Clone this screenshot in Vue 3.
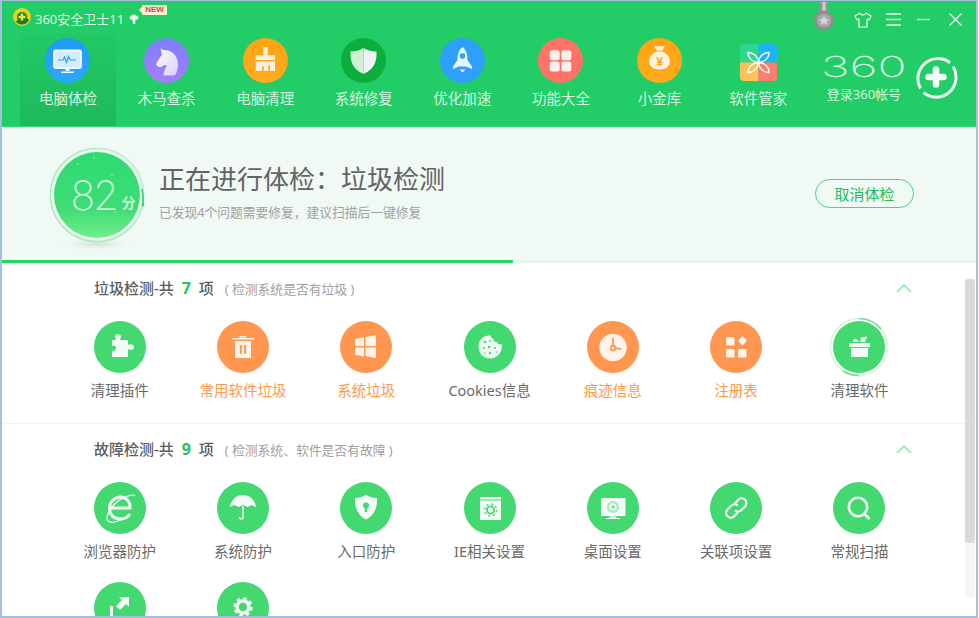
<template>
  <div class="window">
    <header class="header">
      <div class="titlebar">
        <svg class="logo" viewBox="0 0 18 18" width="18" height="18">
          <circle cx="9" cy="9" r="9" fill="#e8d21a" />
          <path d="M3 14 A8 8 0 0 0 16 12 L13 9 L6 10Z" fill="#1f7a2a" />
          <circle cx="9" cy="9" r="5" fill="#17802e" />
          <path d="M7.8 5.5h2.4v2.3h2.3v2.4h-2.3v2.3H7.8v-2.3H5.5V7.8h2.3z" fill="#f2e33a" />
        </svg>
        <span class="app-name">360安全卫士11</span>
        <svg class="tree" viewBox="0 0 10 11" width="10" height="11">
          <path d="M5 0.5c2 0 2.6 1 2.6 1.6C9 2.3 9.8 3.3 9.4 4.6 9 5.8 7.6 6 6.3 5.8V10H3.7V5.8C2.400 6 1 5.800 .6 4.600.2 3.300 1 2.300 2.400 2.100 2.400 1.500 3 .5 5 .5z" fill="#e4f8ec" />
        </svg>
        <span class="new-tag">NEW</span>
        <div class="spacer"></div>
        <svg class="medal" viewBox="0 0 20 29" width="20" height="29">
          <rect x="6" y="0" width="8" height="9" fill="#9a9a9a" />
          <rect x="8.500" y="0" width="3" height="9" fill="#cfcfcf" />
          <circle cx="10" cy="18.500" r="10" fill="#8f8f8f" />
          <circle cx="10" cy="18.500" r="7" fill="#a8a8a8" />
          <path d="M10 13.500l1.500 3.200 3.500.4-2.600 2.300.7 3.400-3.100-1.700-3.100 1.700.7-3.400L5 17.100l3.500-.4z" fill="#d6d6d6" />
        </svg>
        <svg class="ctl shirt" viewBox="0 0 18 16" width="18" height="16">
          <path d="M6 1 L1 4 L3 8 L5 7 V15 H13 V7 L15 8 L17 4 L12 1 C11.500 3.500 6.500 3.500 6 1Z" fill="none" stroke="#f4fdf7" stroke-width="1.200" stroke-linejoin="round" />
        </svg>
        <svg class="ctl menu" viewBox="0 0 15 13" width="15" height="13">
          <path d="M0 1h15M0 6.500h15M0 12h15" stroke="#e8f9ef" stroke-width="1.300" />
        </svg>
        <svg class="ctl min" viewBox="0 0 13 13" width="13" height="13">
          <path d="M0 6.500h13" stroke="#e8f9ef" stroke-width="1.300" />
        </svg>
        <svg class="ctl close" viewBox="0 0 13 13" width="13" height="13">
          <path d="M.5 .5l12 12M12.500 .5l-12 12" stroke="#e8f9ef" stroke-width="1.300" />
        </svg>
      </div>
      <nav class="nav">
        <div class="tabs">
          <div v-for="(t, i) in tabs" :key="t.label" class="tab" :class="{ active: i === 0 }">
            <div class="tab-ico" :class="t.cls">
              <svg viewBox="0 0 45 45" width="45" height="45" v-html="t.svg"></svg>
            </div>
            <span class="tab-label">{{ t.label }}</span>
          </div>
        </div>
        <div class="account">
          <div class="account-text">
            <div class="brand"><span>360</span></div>
            <div class="login">登录360帐号</div>
          </div>
          <svg class="plus" viewBox="0 0 44 44" width="44" height="44">
            <path d="M6.500 33.500 A20 20 0 0 1 36 7.700 M39 11.500 A20 20 0 0 1 9.500 37.700" fill="none" stroke="#f0fcf5" stroke-width="3" />
            <path d="M14.500 22h15M22 14.500v15" stroke="#f4fdf7" stroke-width="6.500" stroke-linecap="round" />
          </svg>
        </div>
      </nav>
    </header>

    <section class="status">
      <div class="score">
        <svg class="score-ring" viewBox="0 0 100 110" width="100" height="110">
          <defs>
            <linearGradient id="scoreFill" x1="0" y1="0" x2="0" y2="1">
              <stop offset="0" stop-color="#2edb72" />
              <stop offset=".65" stop-color="#3edc75" />
              <stop offset="1" stop-color="#72ee8a" />
            </linearGradient>
            <radialGradient id="scoreShadow">
              <stop offset="0" stop-color="#d6dcd8" />
              <stop offset="1" stop-color="#eff8f3" stop-opacity="0" />
            </radialGradient>
          </defs>
          <ellipse cx="50" cy="99" rx="40" ry="7" fill="url(#scoreShadow)" />
          <circle cx="50" cy="50" r="43" fill="url(#scoreFill)" />
          <circle cx="50" cy="50" r="46.500" fill="none" stroke="#a4edbc" stroke-width="1.500" />
          <path d="M50 3.500 A46.500 46.500 0 0 1 96.500 50" fill="none" stroke="#bff3cf" stroke-width="1.500" />
          <path d="M95 44 A46.500 46.500 0 0 1 96 59" fill="none" stroke="#2edb72" stroke-width="1.800" />
          <circle cx="96" cy="60" r="1.400" fill="#28d56b" />
          <circle cx="31" cy="19" r="1" fill="#7fe9a4" />
          <circle cx="47" cy="13" r="1" fill="#7fe9a4" />
          <circle cx="65" cy="30" r="1" fill="#7fe9a4" />
          <circle cx="68" cy="67" r="1" fill="#7fe9a4" />
        </svg>
        <div class="score-text"><span class="score-num">82</span><span class="score-unit">分</span></div>
      </div>
      <div class="status-text">
        <h1>正在进行体检：垃圾检测</h1>
        <p>已发现4个问题需要修复，建议扫描后一键修复</p>
      </div>
      <button class="cancel">取消体检</button>
    </section>
    <div class="progress"><div class="progress-bar" :style="{ width: progress + 'px' }"></div></div>

    <main class="main">
      <section v-for="s in sections" :key="s.title" class="group">
        <div class="group-head">
          <span class="group-title">{{ s.title }}-共 <b>{{ s.total }}</b> 项</span>
          <span class="group-hint">( {{ s.hint }} )</span>
          <svg class="chevron" viewBox="0 0 16 9" width="16" height="9">
            <path d="M1 8l7-7 7 7" fill="none" stroke="#86e6a8" stroke-width="1.500" />
          </svg>
        </div>
        <div class="grid">
          <div v-for="(it, i) in s.items" :key="i" class="item" :class="{ warn: it.warn }">
            <div class="circle">
              <svg viewBox="0 0 52 52" width="52" height="52" v-html="it.svg"></svg>
              <svg v-if="it.busy" class="busy" viewBox="0 0 60 60" width="60" height="60">
                <circle cx="30" cy="30" r="28.500" fill="none" stroke="#d5f5df" stroke-width="1.500" />
                <path d="M30 1.500 A28.500 28.500 0 0 1 52 12 M30 58.500 A28.500 28.500 0 0 1 14 54" fill="none" stroke="#6fe096" stroke-width="1.500" />
              </svg>
            </div>
            <span v-if="it.label" class="item-label">{{ it.label }}</span>
          </div>
        </div>
      </section>
      <div class="scrollbar"><div class="thumb"></div></div>
    </main>
  </div>
</template>

<script setup>
const progress = 511

const W = '#f4fbf6'
const O = '#fff3ea'

const tabs = [
  {
    label: '电脑体检',
    cls: 'blue',
    svg: `<rect x="9" y="12.500" width="27" height="17.500" rx="1.500" fill="#d4ecff" stroke="#f2f9ff" stroke-width="1.800"/>
      <path d="M13 22h5l1.500-3 2 5.500 2-6 1.500 3.500h6" fill="none" stroke="#2e9ff0" stroke-width="1.200"/>
      <path d="M20.500 31h4v2h-4zM16 33.500h13v1.500h-13z" fill="#f2f9ff"/>`,
  },
  {
    label: '木马查杀',
    cls: 'purple',
    svg: `<defs><linearGradient id="hs" x1="0" y1="0" x2="1" y2="1"><stop offset="0" stop-color="#fff"/><stop offset="1" stop-color="#d9cffb"/></linearGradient></defs>
      <path d="M16 9.500c1 1 2 2 3 2.500 8-1 15 5 15 14 0 5-1 8-3 11.500H19.500c-.5-3.500 2-7 3.500-10-2-.5-3.500-.5-5 1-1.500 1.300-4.500.5-5.500-1.500-.5-1 0-2 .8-3.200 1.500-2.300 3-5 4.700-7-.8-2.500-1-5-1.500-7.300z" fill="url(#hs)"/>`,
  },
  {
    label: '电脑清理',
    cls: 'orange',
    svg: `<path d="M20.300 9h4.400v8H32v5H12.700v-5h7.600z" fill="#fff0dc"/>
      <path d="M12.700 23.500H32V33h-5v-5.500h-1.800V33h-4.400v-4.500H19V33h-6.300z" fill="#fff0dc"/>`,
  },
  {
    label: '系统修复',
    cls: 'dark',
    svg: `<path d="M22.500 10c4 2.500 8 3.500 13 3.500.5 9-2 18-13 22.500z" fill="#eef3fb"/>
      <path d="M22.500 10c-4 2.500-8 3.500-13 3.500-.5 9 2 18 13 22.500z" fill="#cff2d6"/>`,
  },
  {
    label: '优化加速',
    cls: 'sky',
    svg: `<path d="M22.500 9c4 3 5 8 5 13l4.500 6.500v2.500l-6-2.500h-7l-6 2.500v-2.500l4.500-6.500c0-5 1-10 5-13z" fill="#e9f4ff"/>
      <circle cx="22.500" cy="18" r="2.800" fill="#2e9ffb"/>
      <path d="M19.500 31.500h6l-3 3z" fill="#e9f4ff"/>`,
  },
  {
    label: '功能大全',
    cls: 'coral',
    svg: `<g fill="#ffeeea"><rect x="11.700" y="12.300" width="10" height="10" rx="2.500"/><rect x="23.300" y="12.300" width="10" height="10" rx="2.500"/><rect x="11.700" y="23.500" width="10" height="10" rx="2.500"/><rect x="23.300" y="23.500" width="10" height="10" rx="2.500"/></g>`,
  },
  {
    label: '小金库',
    cls: 'orange',
    svg: `<path d="M17 7.500c2 1 3.500.8 5.500.8s3.500.2 5.500-.8l-2.500 5h-6z" fill="#fff3df"/>
      <path d="M19.500 13.500h6c4 2 7.500 5.500 7.500 9.500 0 5.500-4.500 8.500-10.500 8.500S12 28.500 12 23c0-4 3.500-7.500 7.500-9.500z" fill="#fff3df"/>
      <text x="22.500" y="27.500" text-anchor="middle" font-size="12" font-weight="700" font-family="Liberation Sans, sans-serif" fill="#ffa514">¥</text>`,
  },
  {
    label: '软件管家',
    cls: 'plain',
    svg: `<g transform="translate(4 6)"><path d="M4 0h14.500v18.500H0V4a4 4 0 0 1 4-4z" fill="#2fd68c"/><path d="M18.500 0H33a4 4 0 0 1 4 4v14.500H18.500z" fill="#19b6fb"/>
      <path d="M0 18.500h18.500V37H4a4 4 0 0 1-4-4z" fill="#ffbf59"/><path d="M18.500 18.500H37V33a4 4 0 0 1-4 4H18.500z" fill="#ff7d6f"/>
      <g fill="none" stroke="#fff" stroke-width="1.300"><path d="M18.500 18.500C12 18 8 14 8 8.500c5 0 10 3.500 10.500 10z"/><path d="M18.500 18.500C25 18 29 14 29 8.500c-5 0-10 3.500-10.500 10z"/><path d="M18.500 18.500C12 19 8 23 8 28.500c5 0 10-3.500 10.500-10z"/><path d="M18.500 18.500C25 19 29 23 29 28.500c-5 0-10-3.500-10.500-10z"/></g></g>`,
  },
]

const junk = [
  {
    label: '清理插件',
    svg: `<path d="M21 15.500c0-3 6-3 6 0 0 1.500-1 2-1 3.500h8v5c1.500-1.500 6-1 6 2s-4.500 3.500-6 2v8H18v-6.500c1.500 1 4 .3 4-2.500s-2.500-3-4-2V19h4c0-1.500-1-2-1-3.500z" fill="${W}"/>`,
  },
  {
    label: '常用软件垃圾',
    warn: true,
    svg: `<path d="M15 17h22v1.500H15zM22.500 15h7v1.500h-7z" fill="${O}"/>
      <path d="M18 20h16v17H18z" fill="${O}"/><path d="M22.800 24h2v9h-2zM27.200 24h2v9h-2z" fill="#ff9751"/>`,
  },
  {
    label: '系统垃圾',
    warn: true,
    svg: `<g fill="${O}"><path d="M15 18l9-1.800v8.900h-9z"/><path d="M25.500 16l10.500-2v11.100H25.500z"/><path d="M15 26.600h9v8.900l-9-1.800z"/><path d="M25.500 26.600H36v10.400l-10.500-2z"/></g>`,
  },
  {
    label: 'Cookies信息',
    svg: `<path d="M27 14.500c-.5 2 1 3.300 2.500 3.200-.3 2 1.500 3.800 3.500 3.200 0 1.500 1.800 2.500 5 2.600.5 8-5 14-12 14-6.500 0-11.500-5-11.500-12 0-6.500 5-12 12.500-11z" fill="#eefaf1"/>
      <g fill="#44d870"><circle cx="21" cy="21" r="1.300"/><circle cx="26" cy="20" r=".9"/><circle cx="20" cy="27" r="1"/><circle cx="25" cy="26" r="1.300"/><circle cx="31" cy="27" r="1.100"/><circle cx="26" cy="32" r="1.200"/><circle cx="33" cy="31" r=".8"/><circle cx="21" cy="32" r=".8"/></g>`,
  },
  {
    label: '痕迹信息',
    warn: true,
    svg: `<circle cx="26" cy="26.500" r="13.700" fill="${O}"/><path d="M26 17v7.500M28 27l6 1.200" stroke="#ff9751" stroke-width="1.800" fill="none"/><circle cx="26" cy="27" r="2.400" fill="none" stroke="#ff9751" stroke-width="1.600"/>`,
  },
  {
    label: '注册表',
    warn: true,
    svg: `<g fill="${O}"><rect x="16" y="16" width="8.500" height="8.500" rx=".8"/><rect x="16" y="28" width="8.500" height="8.500" rx=".8"/><rect x="28" y="28" width="8.500" height="8.500" rx=".8"/><path d="M32.500 15l4.500 4.800-4.500 4.700-4.500-4.700z"/></g>`,
  },
  {
    label: '清理软件',
    busy: true,
    svg: `<g fill="${W}"><path d="M16 22h21v4H16z"/><path d="M18 27h17v9H18z"/><path d="M20 21l1-3.500 4 1.500 .5 2zM27 21l1-4.500 6-1-2 5.500z"/></g>`,
  },
]

const fault = [
  {
    label: '浏览器防护',
    svg: `<g fill="none" stroke="${W}"><path d="M16 26h20c.5-6.500-4-11-9.500-11S15.500 20 15.500 26.500 20 37 26.500 37c4 0 7.500-1.500 9-5" stroke-width="3"/><path d="M14 39c-3-4 2-14 10-20 7-5 15-7 17-5" stroke-width="1.300"/><path d="M14 39c2 2 8 1 13-1" stroke-width="1.300"/></g>`,
  },
  {
    label: '系统防护',
    svg: `<path d="M26 13c7 0 12 5 13 12l-4.500-2-4 2-4.500-2-4.500 2-4-2-4.500 2c1-7 6-12 12-12z" fill="${W}"/><path d="M26 24v11c0 2.500-3.500 2.500-3.500 0" fill="none" stroke="${W}" stroke-width="1.500"/>`,
  },
  {
    label: '入口防护',
    svg: `<path d="M26 13c3.500 2 7 3 11 3 .5 8.500-2 17-11 21.500C17 33 14.500 24.500 15 16c4 0 7.500-1 11-3z" fill="${W}"/><circle cx="26" cy="23.500" r="3" fill="#44d870"/><path d="M24.800 25h2.400v5h-2.400z" fill="#44d870"/>`,
  },
  {
    label: 'IE相关设置',
    svg: `<rect x="16" y="15" width="21" height="23" fill="${W}"/><path d="M16 18h21" stroke="#44d870" stroke-width="1"/><circle cx="26.500" cy="28" r="3.600" fill="none" stroke="#44d870" stroke-width="1.800"/><circle cx="26.500" cy="28" r="6" fill="none" stroke="#44d870" stroke-width="1.400" stroke-dasharray="2 2.700"/>`,
  },
  {
    label: '桌面设置',
    svg: `<rect x="14" y="16" width="24.500" height="18" fill="${W}"/><circle cx="26" cy="25" r="6" fill="#a9e9bd"/><circle cx="26" cy="25" r="3.800" fill="${W}"/><circle cx="26" cy="25" r="1.800" fill="#7fdd9e"/><path d="M22.500 34.500h7v1.500h3.500v1H19v-1h3.500z" fill="${W}"/>`,
  },
  {
    label: '关联项设置',
    svg: `<g fill="none" stroke="${W}" stroke-width="2.200"><path d="M25 21.500l3-3.500c2-2 5-2.200 7-.3s1.800 5-.2 7l-3.300 3.300c-2 2-5 2-6.700.3"/><path d="M27.500 30.500l-3 3.500c-2 2-5 2.200-7 .3s-1.800-5 .2-7l3.300-3.300c2-2 5-2 6.700-.3"/></g>`,
  },
  {
    label: '常规扫描',
    svg: `<circle cx="25" cy="25" r="9.200" fill="none" stroke="${W}" stroke-width="2.600"/><path d="M31.500 32l5 5" stroke="${W}" stroke-width="2.800"/>`,
  },
  {
    svg: `<path d="M25 15h10v10l-3-3-6 6-4-4 6-6z" fill="${W}"/><path d="M19 24v10h10v3H16V24z" fill="${W}"/>`,
  },
  {
    svg: `<circle cx="26" cy="25" r="6" fill="none" stroke="${W}" stroke-width="3.500"/><circle cx="26" cy="25" r="8.500" fill="none" stroke="${W}" stroke-width="2.500" stroke-dasharray="3.500 3.170"/>`,
  },
]

const sections = [
  { title: '垃圾检测', hint: '检测系统是否有垃圾', total: 7, items: junk },
  { title: '故障检测', hint: '检测系统、软件是否有故障', total: 9, items: fault },
]
</script>

<style>
html,
body {
  background: #fff;
  overflow: hidden;
}
</style>

<style scoped>
.window {
  box-sizing: border-box;
  width: 978px;
  height: 618px;
  border: solid #a5bfe0;
  border-width: 1px 2px 2px 2px;
  background: #fff;
  display: flex;
  flex-direction: column;
  overflow: hidden;
  font-family: "Noto Sans", "Noto Sans CJK SC", sans-serif;
}

.header {
  height: 125px;
  background: #22cc66;
  flex: none;
  display: flex;
  flex-direction: column;
}

.titlebar {
  height: 33px;
  display: flex;
  align-items: center;
  padding-left: 11px;
  flex: none;
}

.logo {
  margin-right: 4px;
  margin-top: -1px;
}

.app-name {
  color: #dbf7e6;
  font-size: 13px;
  line-height: 16px;
  margin-top: 3px;
}

.tree {
  margin-left: 5px;
  margin-top: 3px;
}

.new-tag {
  position: relative;
  background: #fff1d8;
  color: #d8492e;
  font: 700 8px/10px "Liberation Sans", sans-serif;
  padding: 0 3px;
  border-radius: 1px;
  margin-left: 3px;
  margin-top: -15px;
}

.new-tag::before {
  content: "";
  position: absolute;
  left: -3px;
  top: 2px;
  border: 3px solid transparent;
  border-left: 0;
  border-right-color: #fff1d8;
}

.spacer {
  flex: 1;
}

.medal {
  margin-top: -3px;
  margin-right: 20px;
}

.ctl {
  flex: none;
  margin-top: 4px;
}

.shirt {
  margin-right: 14px;
}

.menu {
  margin-right: 16px;
}

.min {
  margin-right: 19px;
}

.close {
  margin-right: 14px;
}

.nav {
  flex: 1;
  display: flex;
  padding-left: 16.700px;
}

.tabs {
  display: flex;
}

.tab {
  width: 98.600px;
  display: flex;
  flex-direction: column;
  align-items: center;
  padding-top: 4px;
}

.tab.active {
  background: linear-gradient(#22c964, #1eb95b) center / 96px 100% no-repeat;
}

.tab-ico {
  width: 45px;
  height: 45px;
  border-radius: 50%;
}

.tab-ico svg {
  display: block;
}

.blue {
  background: linear-gradient(#1f9bf2, #29a9fb);
}

.purple {
  background: linear-gradient(#7a80fb, #a77cff);
}

.orange {
  background: linear-gradient(#ffa314, #ffab1c);
}

.dark {
  background: #0cae3c;
}

.sky {
  background: #2e9ffb;
}

.coral {
  background: #ff7466;
}

.plain {
  background: transparent;
}

.tab-label {
  color: #d5f6e2;
  font-size: 14.500px;
  line-height: 20px;
  margin-top: 5px;
}

.account {
  display: flex;
  margin-left: 13.500px;
  padding-top: 21px;
  gap: 7px;
  align-items: flex-start;
}

.account-text {
  width: 86px;
  display: flex;
  flex-direction: column;
  align-items: center;
}

.brand {
  height: 24px;
  display: flex;
  align-items: center;
  justify-content: center;
  color: #d8f7e4;
  font: 200 29px/24px Inter, sans-serif;
}

.brand span {
  display: inline-block;
  transform: scaleX(1.660);
}

.login {
  color: #d5f6e2;
  font-size: 13px;
  line-height: 16px;
  margin-top: 7px;
}

.status {
  height: 134px;
  flex: none;
  box-sizing: border-box;
  background: #f0f9f4;
  border-top: 1px solid #33d973;
  display: flex;
  align-items: center;
  padding: 0 62px 0 45px;
  position: relative;
}

.score {
  width: 100px;
  height: 110px;
  position: relative;
  margin-right: 12px;
  margin-top: 12px;
  flex: none;
}

.score-ring {
  display: block;
}

.score-text {
  position: absolute;
  left: 0;
  top: 0;
  width: 100px;
  height: 100px;
  display: flex;
  align-items: center;
  justify-content: center;
  color: #c8f7d8;
}

.score-num {
  font: 200 41px/50px Inter, sans-serif;
  letter-spacing: -2px;
  margin-left: 12px;
}

.score-unit {
  font-size: 14px;
  font-weight: 700;
  margin-left: 5px;
  margin-top: 14px;
}

.status-text {
  flex: 1;
  margin-top: -4px;
}

.status-text h1 {
  margin: 0;
  font-size: 26px;
  line-height: 34px;
  font-weight: 400;
  color: #636363;
}

.status-text p {
  margin: 7px 0 0;
  font-size: 12.750px;
  line-height: 18px;
  color: #a0a0a0;
}

.cancel {
  width: 99px;
  height: 29px;
  padding: 0;
  border: 1.500px solid #48d480;
  border-radius: 15px;
  background: transparent;
  color: #22bb5e;
  font-family: inherit;
  font-size: 15px;
  line-height: 26px;
}

.progress {
  height: 3px;
  background: #e6f5eb;
  flex: none;
}

.progress-bar {
  height: 100%;
  background: #1fdc60;
}

.main {
  flex: 1;
  position: relative;
  overflow: hidden;
}

.group {
  padding: 15px 0 23px;
}

.group + .group {
  border-top: 1px solid #f3f3f3;
}

.group-head {
  height: 20px;
  display: flex;
  align-items: center;
  padding-left: 92px;
  position: relative;
}

.group-title {
  font-size: 15px;
  line-height: 20px;
  font-weight: 500;
  color: #5c5c5c;
}

.group-title b {
  color: #22c55e;
  font-size: 16px;
  font-weight: 700;
  padding: 0 4px;
}

.group-hint {
  font-size: 12.800px;
  color: #a0a0a0;
  margin-left: 11px;
}

.chevron {
  position: absolute;
  left: 894px;
  top: 6px;
}

.grid {
  display: grid;
  grid-template-columns: repeat(7, 123.300px);
  row-gap: 21px;
  padding-left: 56px;
  margin-top: 23px;
}

.item {
  display: flex;
  flex-direction: column;
  align-items: center;
}

.circle {
  width: 52px;
  height: 52px;
  border-radius: 50%;
  background: #44d870;
  position: relative;
}

.circle svg {
  display: block;
}

.circle .busy {
  position: absolute;
  left: -4px;
  top: -4px;
}

.warn .circle {
  background: #ff9751;
}

.item-label {
  margin-top: 7px;
  font-size: 14.500px;
  line-height: 20px;
  color: #6a6a6a;
  white-space: nowrap;
}

.warn .item-label {
  color: #ff9a4d;
}

.scrollbar {
  position: absolute;
  top: 16px;
  left: 963px;
  width: 10px;
  height: 318px;
  background: #f6f6f6;
}

.thumb {
  height: 264px;
  background: #d9d9d7;
  border-radius: 3px;
}
</style>
